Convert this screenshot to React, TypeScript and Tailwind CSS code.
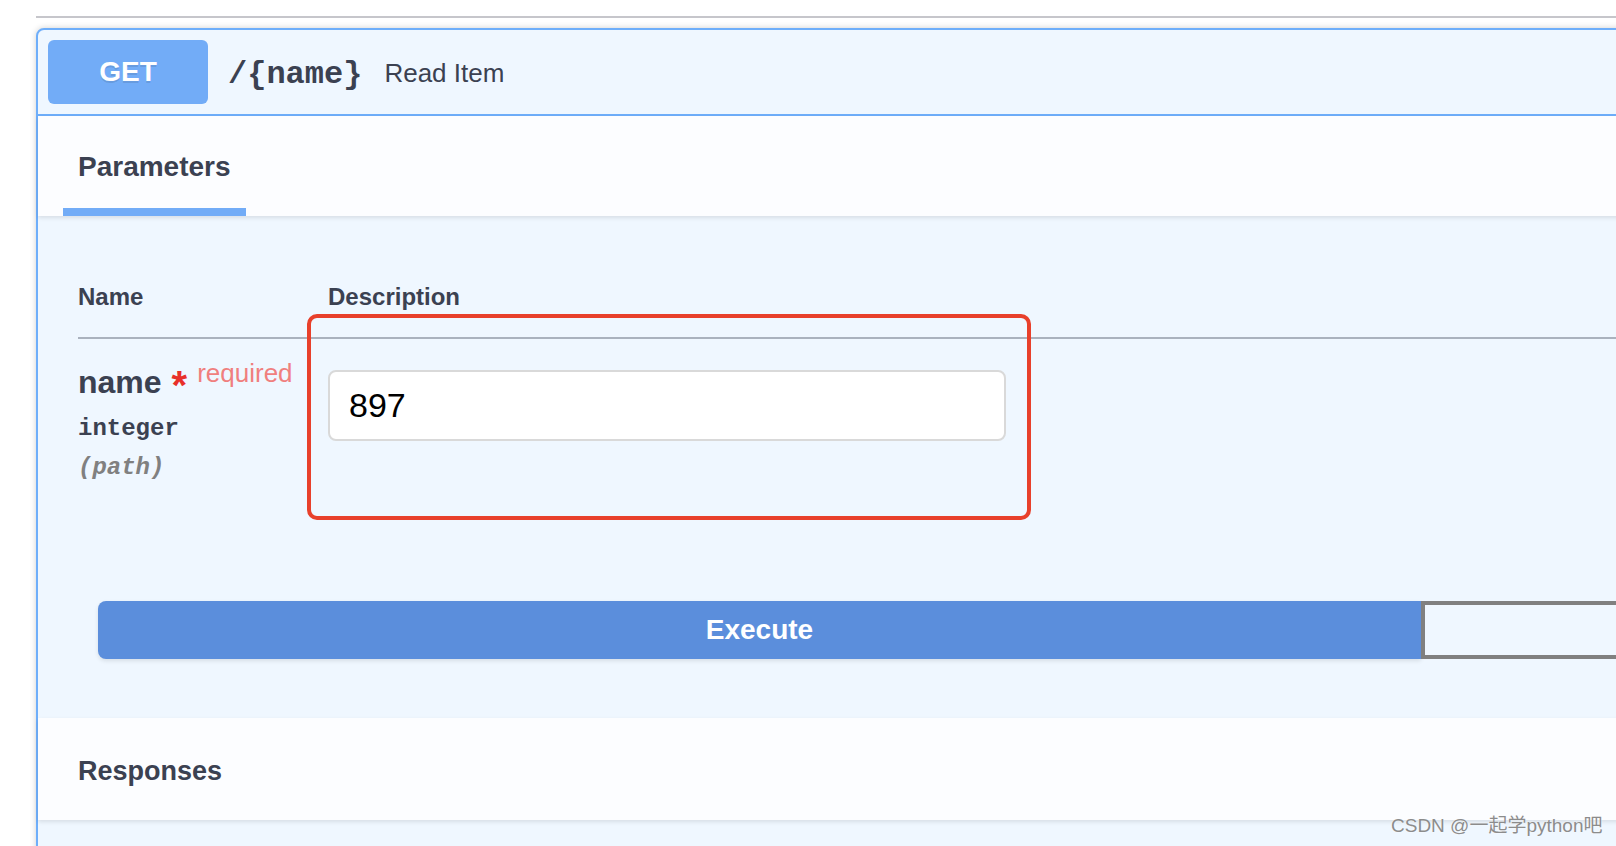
import React from "react";

export default function App() {
  return (
    <div className="relative w-[1616px] h-[846px] overflow-hidden bg-white font-['Liberation_Sans','Noto_Sans_CJK_SC',sans-serif] text-[#3b4151]">
      <div className="ml-[36px] w-[1700px]">
        <div className="mt-[16px] h-[2px] bg-[#c6c6cb]" />
        <div className="mt-[10px] rounded-[8px] border-2 border-[#6eaefa] bg-[#eff7ff] shadow-[0_0_6px_rgba(0,0,0,0.19)]">
          {/* Summary */}
          <div className="flex h-[86px] items-center border-b-2 border-[#6eaefa] px-[10px]">
            <div className="flex h-[64px] w-[160px] items-center justify-center rounded-[6px] bg-[#72acf7] text-[28px] font-bold text-white [text-shadow:0_2px_0_rgba(0,0,0,0.1)]">
              GET
            </div>
            <div className="ml-[20px] mt-[6px] font-['Liberation_Mono',monospace] text-[32px] font-bold text-[#3b4151]">
              /{"{"}name{"}"}
            </div>
            <div className="ml-[22px] mt-[2px] text-[26px] text-[#3b4151]">Read Item</div>
          </div>

          {/* Parameters tab header */}
          <div className="relative z-10 flex h-[100px] flex-col bg-[#fcfdff] pl-[40px] pt-[35px] shadow-[0_2px_4px_rgba(0,0,0,0.1)]">
            <div className="text-[28px] font-bold leading-[32px]">Parameters</div>
            <div className="-ml-[15px] mt-[25px] h-[8px] w-[183px] bg-[#72acf7]" />
          </div>

          {/* Parameters body */}
          <div className="relative px-[40px] pt-[67px]">
            <div className="flex border-b-2 border-[#aab2be] pb-[26px] text-[24px] font-bold leading-[28px]">
              <div className="w-[250px]">Name</div>
              <div>Description</div>
            </div>
            <div className="flex h-[222px]">
              <div className="w-[250px] pt-[25px]">
                <div className="flex h-[37px] items-start">
                  <span className="text-[32px] font-semibold leading-[37px]">name</span>
                  <span className="ml-[10px] mt-[5px] text-[40px] font-bold leading-[32px] text-[#e8302a]">*</span>
                  <span className="ml-[10px] text-[26px] leading-[18px] text-[#f07f7e]">required</span>
                </div>
                <div className="mt-[14px] font-['Liberation_Mono',monospace] text-[24px] font-bold leading-[28px]">
                  integer
                </div>
                <div className="mt-[11px] font-['Liberation_Mono',monospace] text-[24px] font-bold italic leading-[28px] text-[#808080]">
                  (path)
                </div>
              </div>
              <div className="pt-[31px]">
                <div className="flex h-[71px] w-[678px] items-center rounded-[8px] border-2 border-[#d9d9d9] bg-white pl-[19px] text-[34px] text-black">
                  897
                </div>
              </div>
            </div>
            <div className="flex pb-[59px] pl-[20px] pt-[40px]">
              <div className="flex h-[58px] w-[1323px] shrink-0 items-center justify-center rounded-l-[8px] bg-[#5b8edc] text-[28px] font-bold text-white shadow-[0_2px_4px_rgba(0,0,0,0.1)]">
                Execute
              </div>
              <div className="h-[58px] w-[1323px] shrink-0 rounded-r-[8px] border-4 border-[#808080]" />
            </div>

            {/* red annotation box */}
            <div className="absolute left-[269px] top-[98px] h-[206px] w-[724px] rounded-[10px] border-4 border-[#e8402b]" />
          </div>

          {/* Responses */}
          <div className="relative z-10 flex h-[102px] items-center bg-[#fcfdff] pl-[40px] pt-[3px] shadow-[0_2px_4px_rgba(0,0,0,0.1)]">
            <div className="text-[27px] font-bold leading-[32px]">Responses</div>
          </div>
          <div className="h-[80px]" />
        </div>
      </div>

      <div className="absolute left-[1391px] top-[815px] z-20 text-[19px] leading-[22px] text-[#8c8c8c] [text-shadow:0_0_2px_rgba(255,255,255,0.9)]">
        CSDN @一起学python吧
      </div>
    </div>
  );
}
